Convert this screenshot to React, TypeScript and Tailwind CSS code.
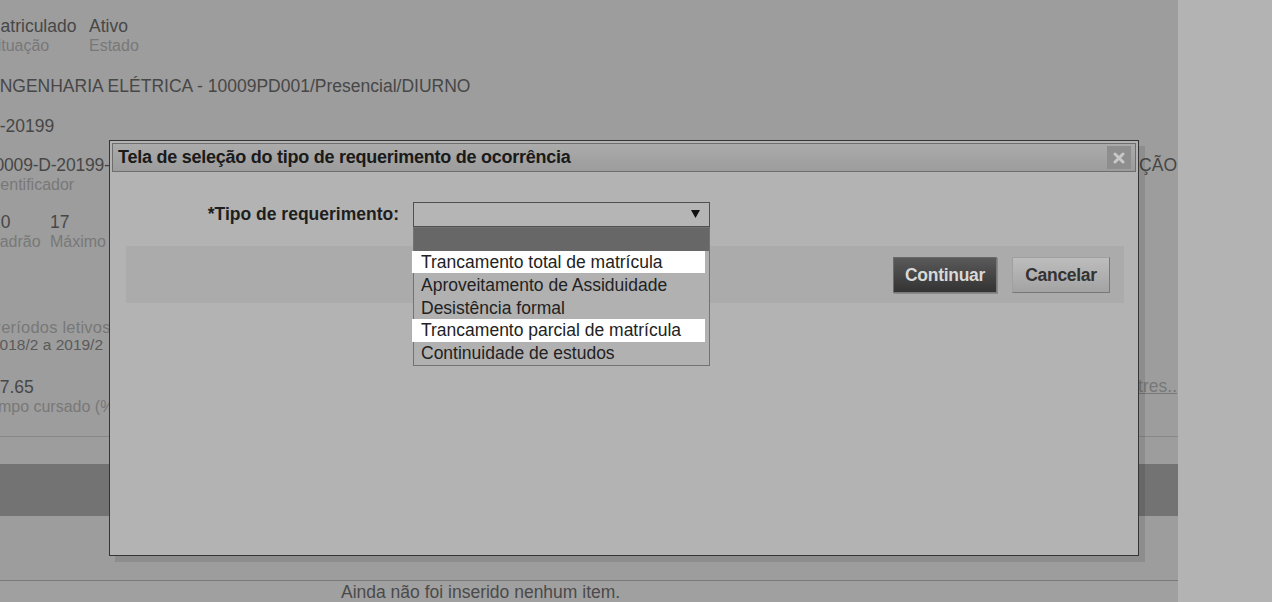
import React from "react";

const options = [
  { label: "Trancamento total de matrícula", marked: true },
  { label: "Aproveitamento de Assiduidade", marked: false },
  { label: "Desistência formal", marked: false },
  { label: "Trancamento parcial de matrícula", marked: true },
  { label: "Continuidade de estudos", marked: false },
];

const Background = () => {
  return (
    <div className="relative w-[1178px] h-full bg-[#9d9d9d] overflow-hidden flex flex-col">
      {/* Dados do aluno */}
      <div className="pt-[16px] ml-[-14px] flex flex-col">
        <div className="flex">
          <div className="w-[103px] flex flex-col">
            <span className="text-[17.5px] leading-[20px] text-[#474747]">Matriculado</span>
            <span className="text-[16px] leading-[20px] text-[#787878] ml-[1px]">Situação</span>
          </div>
          <div className="flex flex-col">
            <span className="text-[17.5px] leading-[20px] text-[#474747]">Ativo</span>
            <span className="text-[16px] leading-[20px] text-[#787878]">Estado</span>
          </div>
        </div>
        <div className="mt-[20px] ml-[2px] text-[17.5px] leading-[20px] text-[#474747]">
          ENGENHARIA ELÉTRICA - 10009PD001/Presencial/DIURNO
        </div>
        <div className="mt-[20px] ml-[1px] text-[17.5px] leading-[20px] text-[#474747]">D-20199</div>
        <div className="mt-[19px] flex justify-between">
          <div className="flex flex-col ml-[-1px]">
            <span className="text-[17.5px] leading-[20px] text-[#474747] tracking-[-0.2px]">10009-D-20199-1</span>
            <span className="text-[16px] leading-[20px] text-[#787878] ml-[2px]">Identificador</span>
          </div>
          <span className="text-[17.5px] leading-[20px] text-[#474747] mr-[1px]">MATRÍCULA EM ANDAMENTO - SITUAÇÃO</span>
        </div>
        <div className="mt-[17px] flex ml-[5px]">
          <div className="w-[59px] flex flex-col">
            <span className="text-[17.5px] leading-[20px] text-[#474747]">20</span>
            <span className="text-[16px] leading-[20px] text-[#787878] ml-[-2px]">Padrão</span>
          </div>
          <div className="flex flex-col">
            <span className="text-[17.5px] leading-[20px] text-[#474747]">17</span>
            <span className="text-[16px] leading-[20px] text-[#787878]">Máximo</span>
          </div>
        </div>
        <div className="mt-[67px] flex flex-col ml-[4px]">
          <span className="text-[16.5px] leading-[17px] text-[#787878] tracking-[0.2px]">Períodos letivos utilizados</span>
          <span className="text-[15.5px] leading-[18px] text-[#5a5a5a] ml-[1px]">2018/2 a 2019/2</span>
        </div>
        <div className="mt-[23px] flex justify-between items-start">
          <div className="flex flex-col ml-[4px]">
            <span className="text-[17.5px] leading-[20px] text-[#474747]">47.65</span>
            <span className="text-[16px] leading-[20px] text-[#787878] ml-[-9px]">Tempo cursado (%)</span>
          </div>
          <span className="text-[17.5px] leading-[18px] text-[#787878] underline mr-[1px]">Ver semestres..</span>
        </div>
      </div>
      <div className="mt-[19px] border-b border-[#878787]" />
      <div className="mt-[27px] h-[52px] bg-[#737373]" />
      <div className="mt-[64px] border-b border-[#7a7a7a]" />
      <div className="flex-1 bg-[#a0a0a0] pl-[341px] pt-[1px] text-[17.5px] leading-[20px] text-[#4a4a4a]">
        Ainda não foi inserido nenhum item.
      </div>
    </div>
  );
};

const Dialog = () => {
  return (
    <div className="absolute left-[109px] top-[140px] w-[1030px] h-[416px] bg-[#b3b3b3] border border-[#353535] shadow-[6px_6px_0_rgba(0,0,0,0.1)] flex flex-col">
      {/* Barra de título */}
      <div className="m-[2px] h-[29px] border border-[#6e6e6e] bg-gradient-to-b from-[#ababab] to-[#9c9c9c] flex items-center justify-between pl-[5px] pr-[4px]">
        <span className="text-[18px] font-bold text-[#1a1a1a] tracking-[-0.25px]">
          Tela de seleção do tipo de requerimento de ocorrência
        </span>
        <div className="w-[24px] h-[23px] bg-[#8e8e8e] flex items-center justify-center">
          <svg width="12" height="12" viewBox="0 0 12 12">
            <path d="M2 2 L10 10 M10 2 L2 10" stroke="#c8c8c8" strokeWidth="3" strokeLinecap="round" />
          </svg>
        </div>
      </div>

      {/* Campo */}
      <div className="mt-[27px] flex items-center">
        <div className="w-[289px] text-right text-[17.5px] font-bold text-[#1e1e1e]">*Tipo de requerimento:</div>
        <div className="relative ml-[14px] w-[297px] h-[25px] border border-[#505050] bg-[#b5b5b5] flex items-center justify-end pr-[9px]">
          <svg width="9" height="8" viewBox="0 0 9 8">
            <path d="M0 0 L9 0 L4.5 8 Z" fill="#111" />
          </svg>
          <div className="absolute left-[-1px] top-[24px] w-[297px] border border-[#737373] bg-[#b1b1b1] z-10 flex flex-col">
            <div className="h-[23px] bg-[#676767]" />
            {options.map((opt, i) => (
              <div key={i} className="relative h-[22.8px] flex items-center">
                {opt.marked && (
                  <div className="absolute left-[-3px] top-0 w-[294px] h-full bg-white border-l border-[#8ab4f8]" />
                )}
                <span className="relative pl-[7px] text-[17.5px] text-[#222]">{opt.label}</span>
              </div>
            ))}
          </div>
        </div>
      </div>

      {/* Barra de botões */}
      <div className="mt-[19px] ml-[16px] mr-[14px] h-[57px] bg-[#ababab] flex items-center justify-end gap-[15px] pr-[14px]">
        <button className="w-[104px] h-[36px] bg-gradient-to-b from-[#5a5a5a] to-[#333] border border-[#6a6a6a] border-r-[#7a7a7a] border-b-[#7a7a7a] shadow-[1px_1px_0_#8a8a8a] text-[17.5px] font-bold text-[#d8d8d8] tracking-[-0.3px]">
          Continuar
        </button>
        <button className="w-[98px] h-[36px] bg-gradient-to-b from-[#bdbdbd] to-[#a3a3a3] border border-[#a0a0a0] border-r-[#777] border-b-[#777] text-[17.5px] font-bold text-[#333] tracking-[-0.3px]">
          Cancelar
        </button>
      </div>
    </div>
  );
};

export default function App() {
  return (
    <div className="relative w-[1272px] h-[602px] overflow-hidden flex font-['Liberation_Sans',Arial,sans-serif]">
      <Background />
      <div className="flex-1 bg-[#b3b3b3]" />
      <Dialog />
    </div>
  );
}
